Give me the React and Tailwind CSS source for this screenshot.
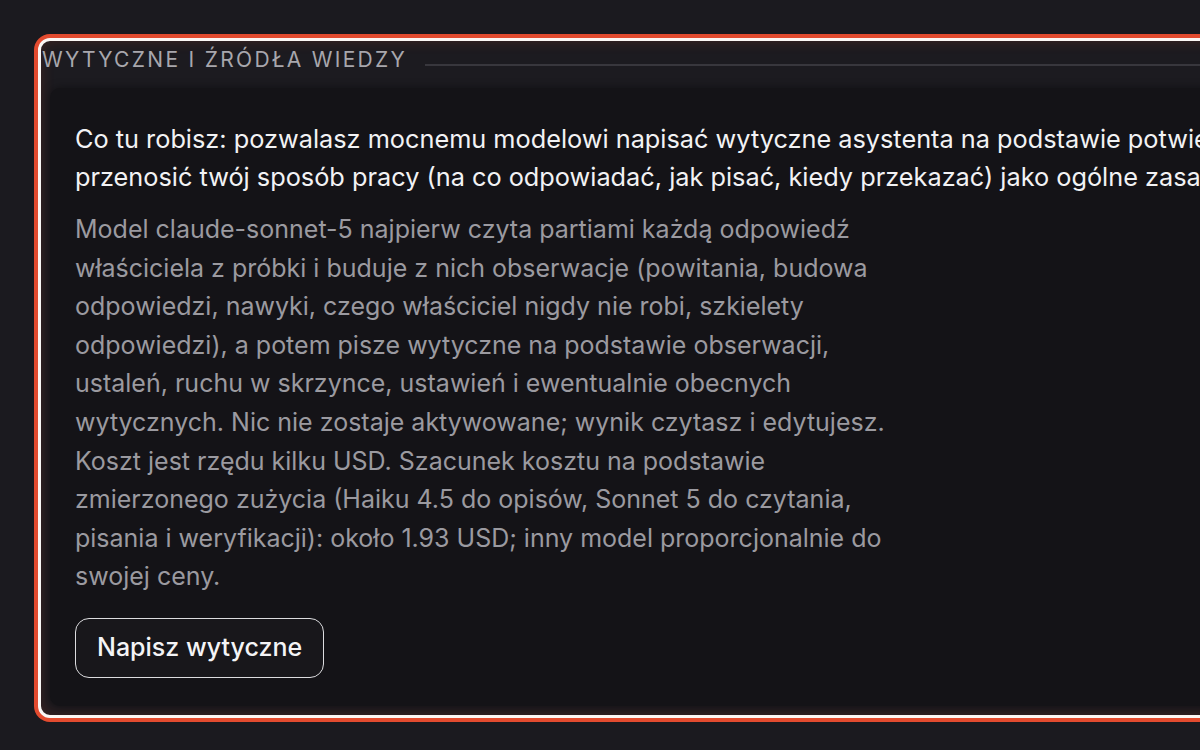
export default function App() {
  return (
    <div
      className="w-[1200px] h-[750px] overflow-hidden bg-[#1b1a1f] pt-[38px] pl-[38px]"
      style={{ fontFamily: "Inter, 'Noto Sans', sans-serif" }}
    >
      <div className="w-[1300px] h-[680px] rounded-[12px] border-[3px] border-[#fbf7f5] shadow-[0_0_0_4px_#e34b2f,inset_0_0_14px_rgba(227,75,47,0.18)] bg-[#1c1b20] flex flex-col">
        <div className="flex items-center h-[34px] mt-[1px]">
          <span className="text-[21px] leading-none tracking-[0.11em] text-[#a8a7ad] whitespace-nowrap pl-[1px]">
            WYTYCZNE I ŹRÓDŁA WIEDZY
          </span>
          <div className="flex-1 h-[2px] bg-[#38373d] ml-[18px] mt-[12px]" />
        </div>
        <div className="ml-[9px] mt-[12px] mb-[9px] flex-1 rounded-[10px] bg-[#141317] pl-[25px] pt-[32px] shadow-[0_0_10px_rgba(0,0,0,0.4)]">
          <p className="text-[25.3px] leading-[38px] text-[#f2f2f4] whitespace-nowrap">
            Co tu robisz: pozwalasz mocnemu modelowi napisać wytyczne asystenta na podstawie potwierdzonych odpowiedzi. Wytyczne mają
            <br />
            przenosić twój sposób pracy (na co odpowiadać, jak pisać, kiedy przekazać) jako ogólne zasady, a nie kopie odpowiedzi.
          </p>
          <p className="mt-[14px] w-[818px] text-[25px] leading-[38.6px] text-[#9b9aa0]">
            Model claude-sonnet-5 najpierw czyta partiami każdą odpowiedź właściciela z próbki i buduje z nich obserwacje (powitania, budowa odpowiedzi, nawyki, czego właściciel nigdy nie robi, szkielety odpowiedzi), a potem pisze wytyczne na podstawie obserwacji, ustaleń, ruchu w skrzynce, ustawień i ewentualnie obecnych wytycznych. Nic nie zostaje aktywowane; wynik czytasz i edytujesz. Koszt jest rzędu kilku USD. Szacunek kosztu na podstawie zmierzonego zużycia (Haiku 4.5 do opisów, Sonnet 5 do czytania, pisania i weryfikacji): około 1.93 USD; inny model proporcjonalnie do swojej ceny.
          </p>
          <button className="mt-[22px] h-[60px] px-[21px] rounded-[14px] border border-[#dcdcdf] bg-[#18171b] text-[25px] font-medium text-[#f4f4f6]">
            Napisz wytyczne
          </button>
        </div>
      </div>
    </div>
  );
}
